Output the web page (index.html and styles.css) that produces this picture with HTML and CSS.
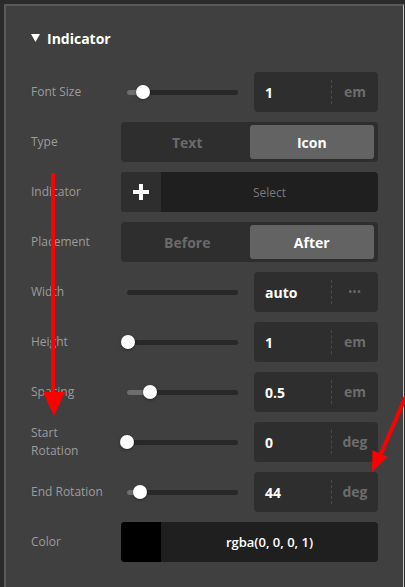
FILE: index.html
```html
<!DOCTYPE html>
<html lang="en">
<head>
  <meta charset="UTF-8" />
  <title>Indicator Settings</title>
  <link rel="stylesheet" href="styles.css">
</head>
<body>
  <div class="frame">
    <div class="panel">
      <div class="section-title">
        <svg class="caret" width="9" height="8" viewBox="0 0 9 8"><polygon points="0,0 9,0 4.5,8" fill="#fff"/></svg>
        Indicator
      </div>

      <div class="rows">
        <div class="row">
          <div class="label">Font Size</div>
          <div class="control split">
            <div class="slider"><div class="track"><div class="fill" style="width: 14%"></div><div class="thumb" style="left: 14%"></div></div></div>
            <div class="num"><span class="val">1</span><span class="unit">em</span></div>
          </div>
        </div>

        <div class="row">
          <div class="label">Type</div>
          <div class="control segmented">
            <button class="seg">Text</button>
            <button class="seg active">Icon</button>
          </div>
        </div>

        <div class="row">
          <div class="label">Indicator</div>
          <div class="control picker">
            <div class="picker-btn">
              <svg width="18" height="18" viewBox="0 0 18 18"><path d="M9 1v16M1 9h16" stroke="#fff" stroke-width="4"/></svg>
            </div>
            <div class="picker-text muted">Select</div>
          </div>
        </div>

        <div class="row">
          <div class="label">Placement</div>
          <div class="control segmented">
            <button class="seg">Before</button>
            <button class="seg active">After</button>
          </div>
        </div>

        <div class="row">
          <div class="label">Width</div>
          <div class="control split">
            <div class="slider"><div class="track"></div></div>
            <div class="num"><span class="val">auto</span><span class="unit dots">•••</span></div>
          </div>
        </div>

        <div class="row">
          <div class="label">Height</div>
          <div class="control split">
            <div class="slider"><div class="track"><div class="fill" style="width: 1%"></div><div class="thumb" style="left: 1%"></div></div></div>
            <div class="num"><span class="val">1</span><span class="unit">em</span></div>
          </div>
        </div>

        <div class="row">
          <div class="label">Spacing</div>
          <div class="control split">
            <div class="slider"><div class="track"><div class="fill" style="width: 21%"></div><div class="thumb" style="left: 21%"></div></div></div>
            <div class="num"><span class="val">0.5</span><span class="unit">em</span></div>
          </div>
        </div>

        <div class="row">
          <div class="label">Start<br>Rotation</div>
          <div class="control split">
            <div class="slider"><div class="track"><div class="fill" style="width: 0%"></div><div class="thumb" style="left: 0%"></div></div></div>
            <div class="num"><span class="val">0</span><span class="unit">deg</span></div>
          </div>
        </div>

        <div class="row">
          <div class="label">End Rotation</div>
          <div class="control split">
            <div class="slider"><div class="track"><div class="fill" style="width: 12%"></div><div class="thumb" style="left: 12%"></div></div></div>
            <div class="num"><span class="val">44</span><span class="unit">deg</span></div>
          </div>
        </div>

        <div class="row">
          <div class="label">Color</div>
          <div class="control picker">
            <div class="swatch"></div>
            <div class="picker-text color-text">rgba(0, 0, 0, 1)</div>
          </div>
        </div>
      </div>
    </div>
  </div>

  <!-- annotation arrows drawn over the screenshot -->
  <svg class="marks" width="405" height="587" viewBox="0 0 405 587">
    <line x1="53" y1="173" x2="53" y2="395" stroke="#f00" stroke-width="4"/>
    <polygon points="43,392 65,392 54,416" fill="#f00"/>
    <line x1="406" y1="396" x2="380" y2="456" stroke="#f00" stroke-width="4"/>
    <polygon points="372.5,450 387.5,457 372,472" fill="#f00"/>
  </svg>
</body>
</html>
```

FILE: styles.css
```css
body {
  margin: 0;
  padding: 0;
  background: #2b2b2b;
  font-family: 'Open Sans', 'Noto Sans', sans-serif;
  overflow: hidden;
}

.frame {
  margin: 4px 0 0 4px;
  width: 400px;
  height: 583px;
  box-sizing: border-box;
  border-top: 2px solid #5a5a5a;
  border-left: 2px solid #5a5a5a;
  border-right: 1px solid #cfcfcf;
  background: #404040;
}

.panel {
  padding: 22px 25px 0 25px;
}

.section-title {
  display: flex;
  align-items: center;
  gap: 7px;
  height: 20px;
  color: #fff;
  font-size: 14px;
  font-weight: bold;
  margin-bottom: 24px;
}

.rows {
  display: flex;
  flex-direction: column;
  gap: 10px;
}

.row {
  display: grid;
  grid-template-columns: 90px 257px;
  align-items: center;
  height: 40px;
}

.label {
  color: #9c9c9c;
  font-size: 12px;
  line-height: 18px;
}

.control {
  height: 40px;
  border-radius: 4px;
}

.split {
  display: grid;
  grid-template-columns: 123px 124px;
  gap: 10px;
}

.slider {
  display: flex;
  align-items: center;
  padding: 0 6px;
}

.track {
  position: relative;
  width: 100%;
  height: 5px;
  border-radius: 3px;
  background: #282828;
}

.fill {
  position: absolute;
  left: 0;
  top: 0;
  bottom: 0;
  border-radius: 3px;
  background: #6e6e6e;
}

.thumb {
  position: absolute;
  top: 50%;
  width: 14px;
  height: 14px;
  border-radius: 50%;
  background: #fff;
  transform: translate(-50%, -50%);
  box-shadow: 0 1px 3px rgba(0, 0, 0, 0.4);
}

.num {
  display: flex;
  align-items: center;
  background: #2e2e2e;
  border-radius: 4px;
}

.val {
  flex: 1;
  padding-left: 11px;
  color: #fff;
  font-size: 14px;
  font-weight: bold;
}

.unit {
  width: 46px;
  height: 24px;
  line-height: 24px;
  text-align: center;
  border-left: 1px dashed #4a4a4a;
  color: #6c6c6c;
  font-size: 14px;
  font-weight: bold;
}

.unit.dots {
  font-size: 9px;
  letter-spacing: 1px;
  color: #6a6a6a;
}

.segmented {
  display: grid;
  grid-template-columns: 1fr 1fr;
  padding: 3px 4px;
  box-sizing: border-box;
  background: #2e2e2e;
}

.seg {
  border: none;
  border-radius: 3px;
  background: transparent;
  color: #6a6a6a;
  font-family: inherit;
  font-size: 14px;
  font-weight: bold;
  padding: 0;
}

.seg.active {
  background: #636363;
  color: #fff;
}

.picker {
  display: flex;
  overflow: hidden;
  background: #1f1f1f;
}

.picker-btn {
  width: 40px;
  display: flex;
  align-items: center;
  justify-content: center;
  background: #2e2e2e;
}

.swatch {
  width: 40px;
  background: #000;
}

.picker-text {
  flex: 1;
  display: flex;
  align-items: center;
  justify-content: center;
}

.muted {
  color: #7a7a7a;
  font-size: 12px;
}

.color-text {
  color: #fff;
  font-size: 13px;
  font-weight: 600;
}

.marks {
  position: absolute;
  left: 0;
  top: 0;
  pointer-events: none;
}
```
